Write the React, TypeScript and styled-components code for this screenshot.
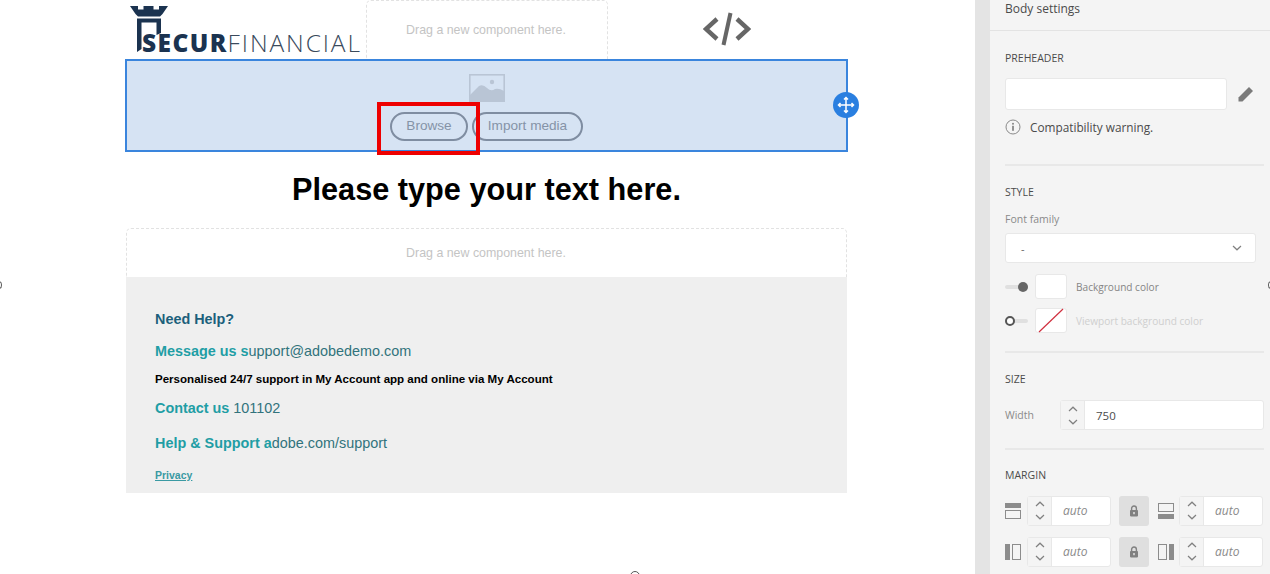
import React from "react";
import styled, { createGlobalStyle } from "styled-components";

const GlobalStyle = createGlobalStyle`
  html, body {
    margin: 0;
    padding: 0;
    width: 1270px;
    height: 574px;
    overflow: hidden;
    background: #fff;
  }
  *, *::before, *::after { box-sizing: border-box; }
`;

const SANS = `"Liberation Sans", Arial, sans-serif`;
const PANEL_FONT = `"Open Sans", "Noto Sans", sans-serif`;

const Chevron = ({ up, size = 10 }: { up?: boolean; size?: number }) => (
  <svg width={size} height={size * 0.6} viewBox="0 0 10 6">
    <path
      d={up ? "M1 5 L5 1.2 L9 5" : "M1 1 L5 4.8 L9 1"}
      fill="none"
      stroke="#808080"
      strokeWidth="1.2"
    />
  </svg>
);

const Stepper = ({ value, italic }: { value: string; italic?: boolean }) => (
  <StepperBox>
    <StepperArrows>
      <Chevron up />
      <Chevron />
    </StepperArrows>
    <StepperValue $italic={italic}>{value}</StepperValue>
  </StepperBox>
);

const Lock = () => (
  <LockBox>
    <svg width="10" height="12" viewBox="0 0 10 12">
      <path d="M2.6 5V3.4a2.4 2.4 0 0 1 4.8 0V5" fill="none" stroke="#808080" strokeWidth="1.4" />
      <rect x="1" y="5" width="8" height="6.4" rx="0.8" fill="#808080" />
      <rect x="4.2" y="7" width="1.6" height="2.2" fill="#ddd" />
    </svg>
  </LockBox>
);

type Side = "top" | "bottom" | "left" | "right";

const MarginIcon = ({ side }: { side: Side }) => {
  const bar = {
    top: { x: 0, y: 0, w: 16, h: 5 },
    bottom: { x: 0, y: 11, w: 16, h: 5 },
    left: { x: 0, y: 0, w: 5, h: 16 },
    right: { x: 11, y: 0, w: 5, h: 16 },
  }[side];
  const box = {
    top: { x: 0.5, y: 7.5, w: 15, h: 8 },
    bottom: { x: 0.5, y: 0.5, w: 15, h: 8 },
    left: { x: 7.5, y: 0.5, w: 8, h: 15 },
    right: { x: 0.5, y: 0.5, w: 8, h: 15 },
  }[side];
  return (
    <svg width="16" height="16" viewBox="0 0 16 16">
      <rect x={bar.x} y={bar.y} width={bar.w} height={bar.h} fill="#8c8c8c" />
      <rect x={box.x} y={box.y} width={box.w} height={box.h} fill="none" stroke="#8c8c8c" />
    </svg>
  );
};

const App = () => {
  return (
    <Page>
      <GlobalStyle />
      <Canvas>
        <EdgeDot $side="left" />
        <Email>
          <TopRow>
            <Logo>
              <svg width="40" height="48" viewBox="0 0 40 48">
                <path
                  d="M1 1H9V4.5H14.5V1H24.5V4.5H30V1H39L33.5 9L31 11.5H9L6.5 9Z"
                  fill="#1b3350"
                />
                <path d="M8 13.5H32V28L27.5 30V17.5H12.5V44L8 47Z" fill="#1b3350" />
              </svg>
              <LogoText>
                <b>SECUR</b>FINANCIAL
              </LogoText>
            </Logo>
            <TopDrop>Drag a new component here.</TopDrop>
            <CodeSlot>
              <svg width="48" height="34" viewBox="0 0 48 34">
                <path
                  d="M14 7 L3 17 L14 27 M34 7 L45 17 L34 27"
                  fill="none"
                  stroke="#666"
                  strokeWidth="4.4"
                />
                <path d="M27.5 1 L20.5 33" fill="none" stroke="#666" strokeWidth="4" />
              </svg>
            </CodeSlot>
          </TopRow>

          <ImageBlock>
            <svg width="36" height="28" viewBox="0 0 36 28">
              <rect x="0.8" y="0.8" width="34.4" height="26.4" fill="none" stroke="#b9c5d5" strokeWidth="1.6" />
              <path
                d="M1 21 L10 12 Q14 10 18 14 Q22 18 26 15 Q30 14 35 17 V27 H1Z"
                fill="#b9c5d5"
              />
              <circle cx="23" cy="8" r="2.2" fill="#b9c5d5" />
            </svg>
            <MediaButtons>
              <MediaButton $w={78}>Browse</MediaButton>
              <MediaButton $w={111}>Import media</MediaButton>
            </MediaButtons>
            <Highlight />
            <MoveHandle>
              <svg width="18" height="18" viewBox="0 0 18 18">
                <path
                  d="M9 1.5V16.5M1.5 9H16.5M7 3.5L9 1.5L11 3.5M7 14.5L9 16.5L11 14.5M3.5 7L1.5 9L3.5 11M14.5 7L16.5 9L14.5 11"
                  fill="none"
                  stroke="#fff"
                  strokeWidth="1.5"
                />
              </svg>
            </MoveHandle>
          </ImageBlock>

          <Heading>Please type your text here.</Heading>
          <MidDrop>Drag a new component here.</MidDrop>

          <Footer>
            <HelpTitle>Need Help?</HelpTitle>
            <InfoLine $top={16}>
              <b>Message us s</b>upport@adobedemo.com
            </InfoLine>
            <Notice>Personalised 24/7 support in My Account app and online via My Account</Notice>
            <InfoLine $top={14}>
              <b>Contact us</b> 101102
            </InfoLine>
            <InfoLine $top={19}>
              <b>Help &amp; Support a</b>dobe.com/support
            </InfoLine>
            <Privacy>Privacy</Privacy>
          </Footer>
        </Email>
        <BottomDot />
      </Canvas>

      <Gutter />

      <Panel>
        <EdgeDot $side="right" />
        <PanelHeader>Body settings</PanelHeader>

        <Section $height={135} $top={20}>
          <SectionTitle>PREHEADER</SectionTitle>
          <PreheaderRow>
            <TextField />
            <svg width="16" height="16" viewBox="0 0 16 16">
              <path d="M0.5 11.5L11 1L15 5L4.5 15.5L0.5 15.5Z" fill="#7a7a7a" />
            </svg>
          </PreheaderRow>
          <Warning>
            <svg width="16" height="16" viewBox="0 0 16 16">
              <circle cx="8" cy="8" r="7" fill="none" stroke="#8a8a8a" />
              <rect x="7.2" y="6.8" width="1.6" height="5" fill="#7a7a7a" />
              <rect x="7.2" y="3.9" width="1.6" height="1.7" fill="#7a7a7a" />
            </svg>
            Compatibility warning.
          </Warning>
        </Section>

        <Section $height={187} $top={19}>
          <SectionTitle>STYLE</SectionTitle>
          <FieldLabel>Font family</FieldLabel>
          <SelectBox>
            -
            <Chevron size={10} />
          </SelectBox>
          <ColorRow $top={11}>
            <Toggle $on />
            <Swatch />
            <ColorName>Background color</ColorName>
          </ColorRow>
          <ColorRow $top={9}>
            <Toggle />
            <Swatch>
              <svg width="32" height="25" viewBox="0 0 32 25">
                <path d="M4 24L28 1" stroke="#d0303f" strokeWidth="1.2" />
              </svg>
            </Swatch>
            <ColorName $muted>Viewport background color</ColorName>
          </ColorRow>
        </Section>

        <Section $height={97} $top={19}>
          <SectionTitle>SIZE</SectionTitle>
          <WidthRow>
            <WidthLabel>Width</WidthLabel>
            <Stepper value="750" />
          </WidthRow>
        </Section>

        <LastSection>
          <SectionTitle>MARGIN</SectionTitle>
          <MarginGrid>
            <MarginIcon side="top" />
            <Stepper value="auto" italic />
            <Lock />
            <MarginIcon side="bottom" />
            <Stepper value="auto" italic />
            <MarginIcon side="left" />
            <Stepper value="auto" italic />
            <Lock />
            <MarginIcon side="right" />
            <Stepper value="auto" italic />
          </MarginGrid>
        </LastSection>
      </Panel>
    </Page>
  );
};

export default App;

const Page = styled.div`
  display: flex;
  width: 1270px;
  height: 574px;
  overflow: hidden;
  background: #fff;
`;

const Canvas = styled.main`
  position: relative;
  width: 975px;
  flex: none;
  padding-left: 125px;
`;

const Gutter = styled.div`
  width: 15px;
  flex: none;
  background: #e4e4e4;
`;

const EdgeDot = styled.span<{ $side: "left" | "right" }>`
  position: absolute;
  top: 281px;
  ${({ $side }) => ($side === "left" ? "left: -4px;" : "right: -4px;")}
  width: 6px;
  height: 8px;
  border: 1px solid #555;
  border-radius: 50%;
  background: #fff;
`;

const BottomDot = styled.span`
  position: absolute;
  left: 630px;
  top: 571px;
  width: 10px;
  height: 10px;
  border: 1px solid #555;
  border-radius: 50%;
  background: #fff;
`;

const Email = styled.div`
  width: 723px;
`;

const TopRow = styled.div`
  display: flex;
  height: 59px;
`;

const Logo = styled.div`
  position: relative;
  width: 241px;
  flex: none;
  padding: 5px 0 0 4px;
`;

const LogoText = styled.div`
  position: absolute;
  left: 17px;
  top: 28px;
  font-family: "Open Sans", sans-serif;
  font-size: 24.5px;
  line-height: 30px;
  font-weight: 300;
  letter-spacing: 1.9px;
  color: #3a4a5c;
  white-space: nowrap;
  b {
    font-family: "Open Sans", sans-serif;
    font-weight: 800;
    letter-spacing: 1.4px;
    color: #1b3350;
  }
`;

const TopDrop = styled.div`
  width: 242px;
  flex: none;
  display: flex;
  align-items: center;
  justify-content: center;
  padding-right: 2px;
  border: 1px dashed #e2e2e2;
  border-bottom: none;
  border-radius: 5px 5px 0 0;
  font-family: ${SANS};
  font-size: 12.4px;
  color: #c4c4c4;
`;

const CodeSlot = styled.div`
  flex: 1;
  display: flex;
  align-items: center;
  justify-content: center;
  svg {
    margin-left: -2px;
    margin-top: -1px;
  }
`;

const ImageBlock = styled.div`
  position: relative;
  height: 93px;
  display: flex;
  flex-direction: column;
  align-items: center;
  padding-top: 13px;
  background: #d6e3f3;
  border: 2px solid #3a85dd;
`;

const MediaButtons = styled.div`
  display: flex;
  gap: 4px;
  margin-top: 10px;
`;

const MediaButton = styled.div<{ $w: number }>`
  width: ${({ $w }) => $w}px;
  height: 29px;
  padding-bottom: 2px;
  display: flex;
  align-items: center;
  justify-content: center;
  border: 2px solid #7f8da1;
  border-radius: 15px;
  font-family: ${SANS};
  font-size: 13.6px;
  color: #8593a7;
`;

const Highlight = styled.div`
  position: absolute;
  left: 250px;
  top: 41px;
  width: 103px;
  height: 53px;
  border: 4px solid #ee0000;
`;

const MoveHandle = styled.div`
  position: absolute;
  right: -13px;
  top: 31px;
  width: 26px;
  height: 26px;
  display: flex;
  align-items: center;
  justify-content: center;
  border-radius: 50%;
  background: #2a7fe0;
`;

const Heading = styled.h1`
  margin: 0;
  height: 76px;
  padding-top: 20px;
  text-align: center;
  font-family: ${SANS};
  font-size: 30.7px;
  line-height: 36px;
  font-weight: 700;
  color: #000;
`;

const MidDrop = styled.div`
  margin-left: 1px;
  width: 721px;
  height: 49px;
  display: flex;
  align-items: center;
  justify-content: center;
  padding-right: 1px;
  border: 1px dashed #e2e2e2;
  border-bottom: none;
  border-radius: 5px 5px 0 0;
  font-family: ${SANS};
  font-size: 12.4px;
  color: #c4c4c4;
`;

const Footer = styled.footer`
  margin-left: 1px;
  width: 721px;
  height: 216px;
  padding: 34px 0 0 29px;
  background: #efefef;
  font-family: ${SANS};
`;

const HelpTitle = styled.div`
  font-size: 14.4px;
  line-height: 16px;
  font-weight: 700;
  color: #1c5f7c;
`;

const InfoLine = styled.div<{ $top: number }>`
  margin-top: ${({ $top }) => $top}px;
  font-size: 14.4px;
  line-height: 16px;
  color: #31737c;
  b {
    color: #1f9ea5;
  }
`;

const Notice = styled.div`
  margin-top: 13px;
  font-size: 11.55px;
  line-height: 14px;
  font-weight: 700;
  color: #000;
`;

const Privacy = styled.div`
  margin-top: 18px;
  font-size: 10.5px;
  line-height: 13px;
  font-weight: 700;
  color: #3a9aa3;
  text-decoration: underline;
`;

const Panel = styled.aside`
  position: relative;
  flex: 1;
  background: #f4f4f4;
  font-family: ${PANEL_FONT};
  color: #4b4b4b;
`;

const PanelHeader = styled.div`
  height: 31px;
  padding: 1px 0 0 15px;
  border-bottom: 1px solid #e3e3e3;
  font-size: 12px;
  line-height: 16px;
  color: #4b4b4b;
`;

const Section = styled.section<{ $height: number; $top: number }>`
  height: ${({ $height }) => $height}px;
  margin: 0 6px 0 15px;
  padding-top: ${({ $top }) => $top}px;
  border-bottom: 2px solid #e8e8e8;
`;

const LastSection = styled.section`
  margin: 0 6px 0 15px;
  padding-top: 18px;
`;

const SectionTitle = styled.div`
  font-size: 10.5px;
  line-height: 14px;
  color: #4b4b4b;
`;

const PreheaderRow = styled.div`
  display: flex;
  align-items: center;
  gap: 11px;
  margin-top: 13px;
`;

const TextField = styled.div`
  width: 222px;
  height: 32px;
  background: #fff;
  border: 1px solid #e8e8e8;
  border-radius: 3px;
`;

const Warning = styled.div`
  display: flex;
  align-items: center;
  gap: 9px;
  margin-top: 9px;
  font-size: 11.8px;
  line-height: 16px;
  color: #4b4b4b;
`;

const FieldLabel = styled.div`
  margin-top: 13px;
  font-size: 10.5px;
  line-height: 14px;
  color: #8a8a8a;
`;

const SelectBox = styled.div`
  width: 251px;
  height: 30px;
  margin-top: 7px;
  padding: 0 13px 0 15px;
  display: flex;
  align-items: center;
  justify-content: space-between;
  background: #fff;
  border: 1px solid #e8e8e8;
  border-radius: 3px;
  font-size: 11px;
  color: #666;
`;

const ColorRow = styled.div<{ $top: number }>`
  display: flex;
  align-items: center;
  margin-top: ${({ $top }) => $top}px;
`;

const Toggle = styled.span<{ $on?: boolean }>`
  position: relative;
  width: 23px;
  height: 4px;
  flex: none;
  border-radius: 2px;
  background: #e0e0e0;
  &::after {
    content: "";
    position: absolute;
    top: -3px;
    ${({ $on }) => ($on ? "right: 0;" : "left: 0;")}
    width: 10px;
    height: 10px;
    border-radius: 50%;
    background: ${({ $on }) => ($on ? "#666" : "#fff")};
    border: ${({ $on }) => ($on ? "none" : "2px solid #555")};
  }
`;

const Swatch = styled.span`
  width: 32px;
  height: 25px;
  flex: none;
  margin-left: 7px;
  display: block;
  background: #fff;
  border: 1px solid #e8e8e8;
  border-radius: 3px;
  svg {
    display: block;
    margin: -1px;
  }
`;

const ColorName = styled.span<{ $muted?: boolean }>`
  margin-left: 9px;
  font-size: 10.1px;
  color: ${({ $muted }) => ($muted ? "#cfcfcf" : "#858585")};
`;

const WidthRow = styled.div`
  display: grid;
  grid-template-columns: 55px 204px;
  align-items: center;
  margin-top: 14px;
`;

const WidthLabel = styled.span`
  font-size: 10.5px;
  color: #8a8a8a;
`;

const MarginGrid = styled.div`
  display: grid;
  grid-template-columns: 16px 84px 35px 15px 84px;
  grid-auto-rows: 31px;
  align-items: center;
  column-gap: 6px;
  row-gap: 10px;
  margin-top: 13px;
  svg {
    display: block;
  }
`;

const StepperBox = styled.div`
  display: flex;
  height: 30px;
  background: #fff;
  border: 1px solid #e8e8e8;
  border-radius: 3px;
`;

const StepperArrows = styled.div`
  width: 24px;
  flex: none;
  display: flex;
  flex-direction: column;
  align-items: center;
  justify-content: center;
  gap: 7px;
  background: #f4f4f4;
  border-right: 1px solid #e8e8e8;
`;

const StepperValue = styled.div<{ $italic?: boolean }>`
  flex: 1;
  display: flex;
  align-items: center;
  padding-left: 11px;
  font-size: ${({ $italic }) => ($italic ? "12px" : "11.5px")};
  font-style: ${({ $italic }) => ($italic ? "italic" : "normal")};
  color: ${({ $italic }) => ($italic ? "#8a8a8a" : "#4b4b4b")};
`;

const LockBox = styled.div`
  width: 30px;
  height: 30px;
  margin-left: 2px;
  display: flex;
  align-items: center;
  justify-content: center;
  background: #dfdfdf;
  border-radius: 3px;
`;
